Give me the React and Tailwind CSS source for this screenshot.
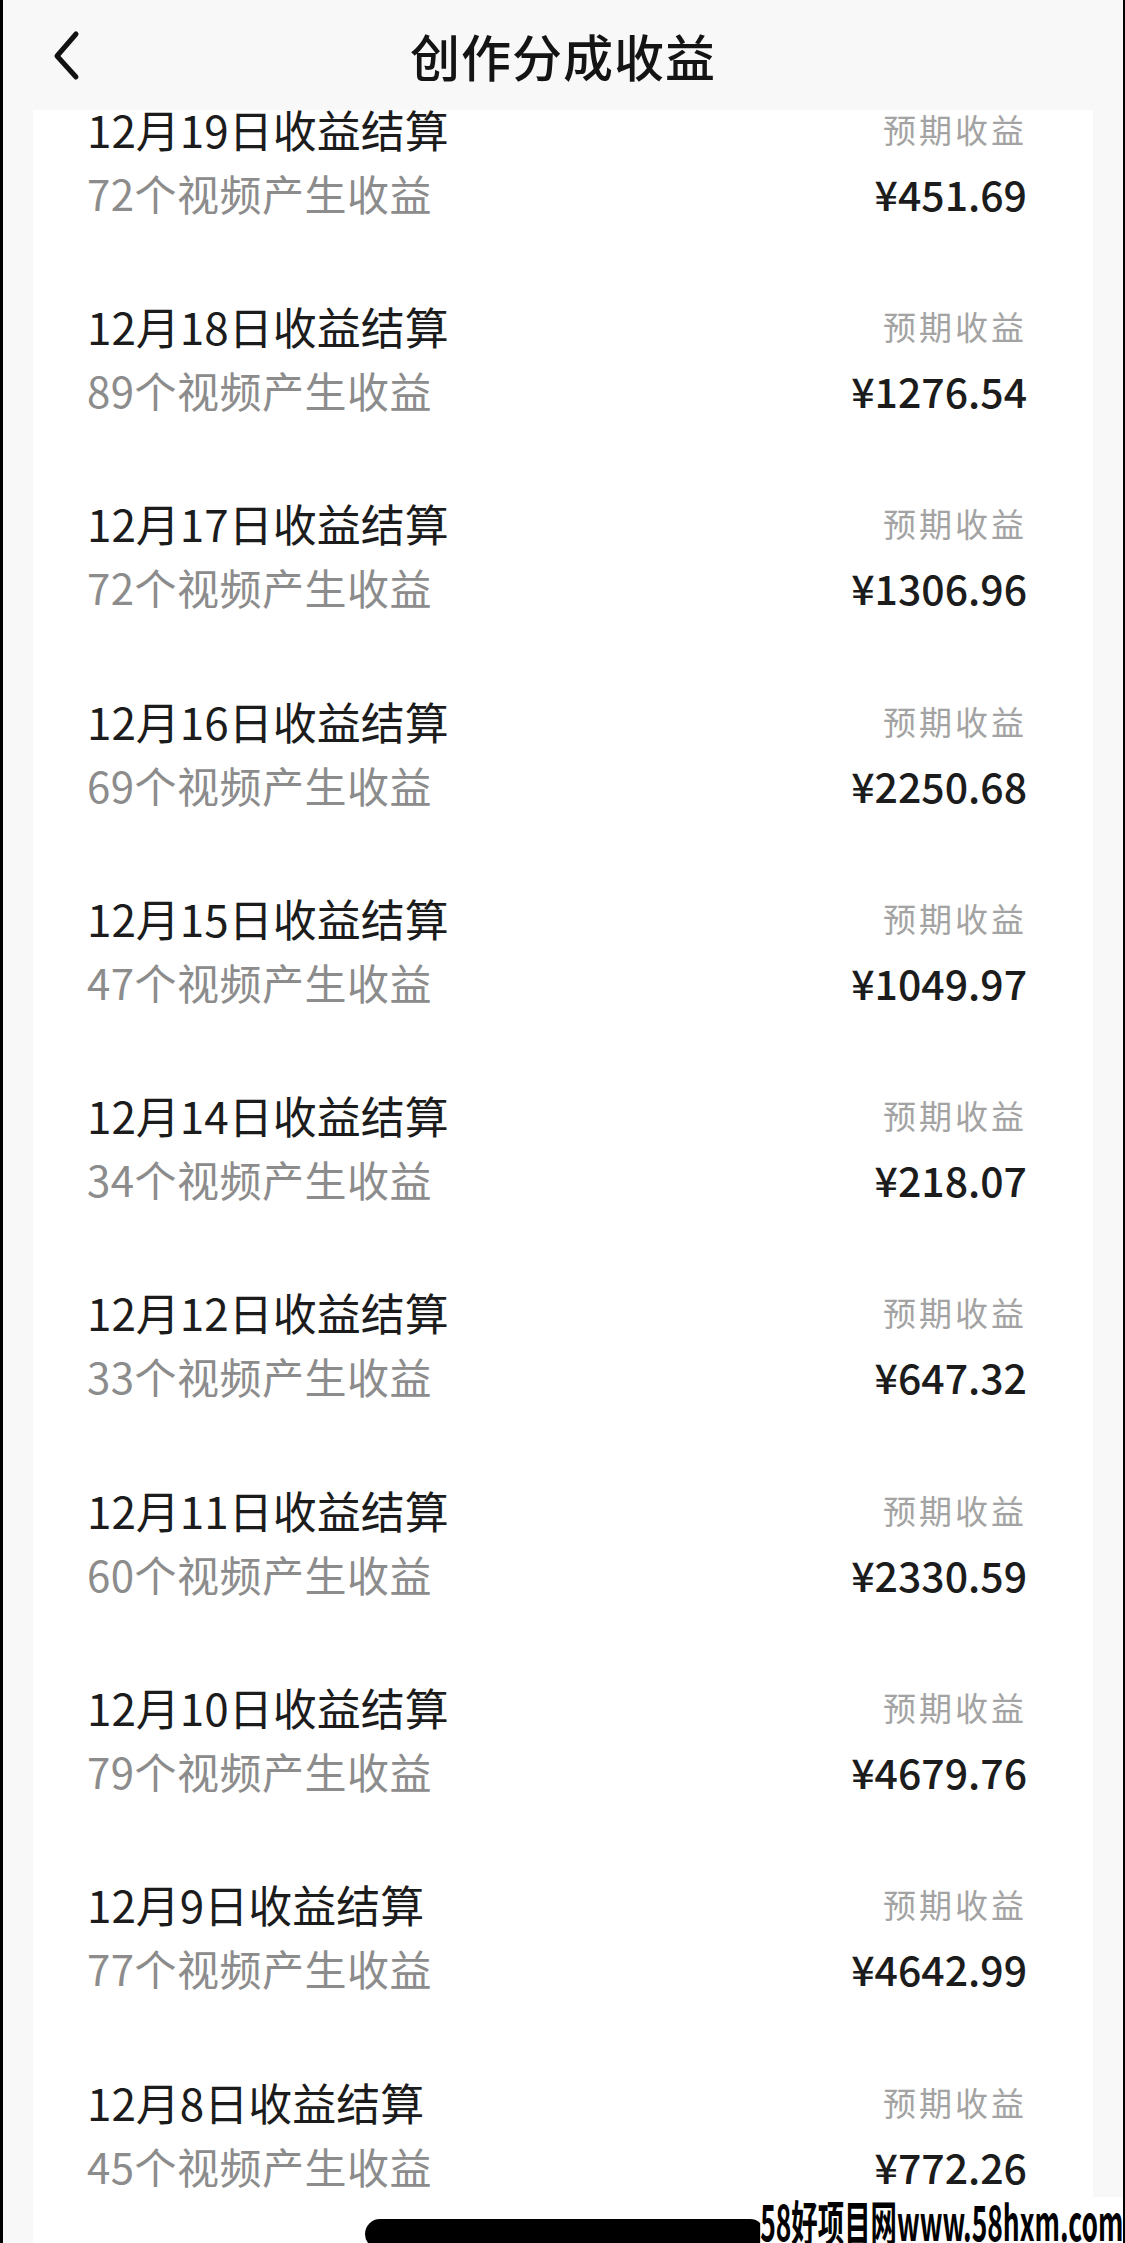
import React from "react";

const rows = [
  { d: "12月19日收益结算", n: "72个视频产生收益", a: "¥451.69" },
  { d: "12月18日收益结算", n: "89个视频产生收益", a: "¥1276.54" },
  { d: "12月17日收益结算", n: "72个视频产生收益", a: "¥1306.96" },
  { d: "12月16日收益结算", n: "69个视频产生收益", a: "¥2250.68" },
  { d: "12月15日收益结算", n: "47个视频产生收益", a: "¥1049.97" },
  { d: "12月14日收益结算", n: "34个视频产生收益", a: "¥218.07" },
  { d: "12月12日收益结算", n: "33个视频产生收益", a: "¥647.32" },
  { d: "12月11日收益结算", n: "60个视频产生收益", a: "¥2330.59" },
  { d: "12月10日收益结算", n: "79个视频产生收益", a: "¥4679.76" },
  { d: "12月9日收益结算", n: "77个视频产生收益", a: "¥4642.99" },
  { d: "12月8日收益结算", n: "45个视频产生收益", a: "¥772.26" },
];

export default function App() {
  return (
    <div className="relative w-[1125px] h-[2243px] overflow-hidden bg-[#f8f8f8] border-l-[3px] border-r-[2px] border-black flex flex-col font-['Noto_Sans_CJK_SC','Noto_Sans',sans-serif]">
      <header className="h-[110px] shrink-0 grid grid-cols-[1fr_auto_1fr] items-center">
        <div className="pl-[46px] flex items-center">
          <svg width="36" height="52" viewBox="0 0 36 52" fill="none">
            <path d="M27 5 L8 27 L27 48" stroke="#111" strokeWidth="5" strokeLinecap="round" strokeLinejoin="round" />
          </svg>
        </div>
        <h1 className="text-[50px] leading-none font-medium text-[#141414] tracking-[1px]">创作分成收益</h1>
        <div />
      </header>
      <main className="flex-1 min-h-0 px-[30px] overflow-hidden">
        <div className="h-full bg-white overflow-hidden">
          <ul className="-mt-[48px]">
            {rows.map((r) => (
              <li key={r.d} className="h-[197.3px] flex items-center justify-between pl-[54px] pr-[66px]">
                <div className="flex flex-col gap-[8px]">
                  <span className="text-[44px] leading-[56px] text-[#1c1c1c]">{r.d}</span>
                  <span className="text-[42px] leading-[56px] text-[#8c8c8c] tracking-[0.5px]">{r.n}</span>
                </div>
                <div className="flex flex-col items-end gap-[8px]">
                  <span className="text-[33px] leading-[56px] text-[#a3a3a3] tracking-[3px]">预期收益</span>
                  <span className="text-[41px] leading-[56px] text-[#1c1c1c] font-medium">{r.a}</span>
                </div>
              </li>
            ))}
          </ul>
        </div>
      </main>
      <div className="absolute bottom-[-6px] left-[362px] w-[400px] h-[30px] rounded-full bg-black" />
      <div className="absolute bottom-0 right-0 origin-bottom-right scale-x-[0.55] bg-white text-black font-bold text-[48px] leading-[46px] whitespace-nowrap">
        58好项目网www.58hxm.com
      </div>
    </div>
  );
}
